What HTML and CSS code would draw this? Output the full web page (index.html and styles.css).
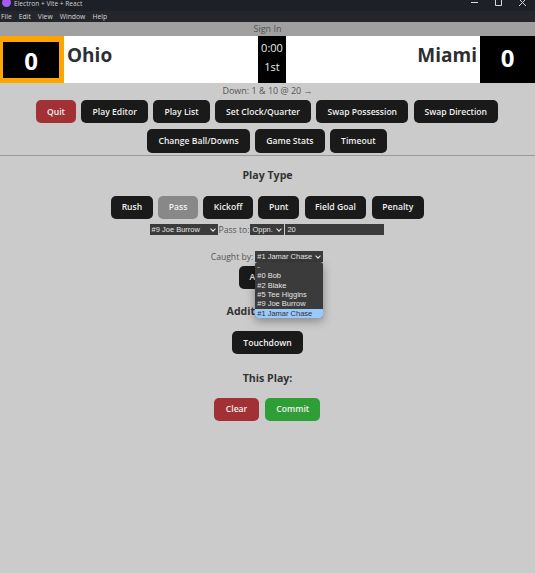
FILE: index.html
```html
<!DOCTYPE html>
<html lang="en">
<head>
<meta charset="utf-8">
<title>Electron + Vite + React</title>
<link rel="stylesheet" href="styles.css">
</head>
<body>
<header class="titlebar">
  <div class="title-left"><span class="app-icon"></span><span>Electron + Vite + React</span></div>
  <div class="win-controls">
    <svg width="9" height="9" viewBox="0 0 9 9"><path d="M1 4.5h7" stroke="#d8d8d8" fill="none"/></svg>
    <svg width="9" height="9" viewBox="0 0 9 9"><path d="M1.5 1.5h6v6h-6z" stroke="#d8d8d8" fill="none"/></svg>
    <svg width="9" height="9" viewBox="0 0 9 9"><path d="M1 1l7 7M8 1l-7 7" stroke="#d8d8d8" fill="none"/></svg>
  </div>
</header>
<nav class="menubar"><span>File</span><span>Edit</span><span>View</span><span>Window</span><span>Help</span></nav>
<div class="signin">Sign In</div>
<section class="scoreboard">
  <div class="score score-home"><div class="score-inner">0</div></div>
  <div class="team team-home">Ohio</div>
  <div class="clock"><div>0:00</div><div>1st</div></div>
  <div class="team team-away">Miami</div>
  <div class="score score-away">0</div>
</section>
<div class="down">Down: 1 &amp; 10 @ 20 →</div>
<div class="btn-rows">
  <div class="row">
    <button class="btn red quit">Quit</button>
    <button class="btn">Play Editor</button>
    <button class="btn">Play List</button>
    <button class="btn">Set Clock/Quarter</button>
    <button class="btn">Swap Possession</button>
    <button class="btn">Swap Direction</button>
  </div>
  <div class="row">
    <button class="btn">Change Ball/Downs</button>
    <button class="btn">Game Stats</button>
    <button class="btn">Timeout</button>
  </div>
</div>
<hr class="divider">
<main class="panel">
  <h3 class="heading play-type">Play Type</h3>
  <div class="row types">
    <button class="btn">Rush</button>
    <button class="btn active">Pass</button>
    <button class="btn">Kickoff</button>
    <button class="btn">Punt</button>
    <button class="btn">Field Goal</button>
    <button class="btn">Penalty</button>
  </div>
  <div class="inputs">
    <span class="sel sel-qb">#9 Joe Burrow<i class="chev"></i></span>
    <span class="lbl">Pass to:</span>
    <span class="sel sel-to">Oppn.<i class="chev"></i></span>
    <span class="yard">20</span>
  </div>
  <div class="caught">
    <span class="lbl">Caught by:</span>
    <span class="anchor">
      <span class="sel sel-caught">#1 Jamar Chase<i class="chev"></i></span>
      <ul class="dropdown">
        <li>-</li>
        <li>#0 Bob</li>
        <li>#2 Blake</li>
        <li>#5 Tee Higgins</li>
        <li>#9 Joe Burrow</li>
        <li class="hl">#1 Jamar Chase</li>
      </ul>
    </span>
  </div>
  <button class="btn add">Add Play</button>
  <h3 class="heading additional">Additional Info:</h3>
  <button class="btn td">Touchdown</button>
  <h3 class="heading this-play">This Play:</h3>
  <div class="row commit-row">
    <button class="btn red">Clear</button>
    <button class="btn green">Commit</button>
  </div>
</main>
</body>
</html>
```
FILE: styles.css
```css
* { box-sizing: border-box; }
html, body { margin: 0; height: 100%; }
body {
  background: #cbcbcb;
  font-family: "Open Sans", "Noto Sans", sans-serif;
  color: #333;
  overflow: hidden;
}
.titlebar {
  height: 11px;
  background: #1d2027;
  color: #cfcfcf;
  display: flex;
  justify-content: space-between;
  align-items: flex-start;
  font-size: 6.6px;
  line-height: 7px;
  overflow: hidden;
}
.title-left { display: flex; align-items: center; gap: 3px; padding-left: 2px; }
.app-icon {
  width: 9px; height: 9px; border-radius: 50%;
  background: #a45cf0;
  margin-top: -2px;
}
.win-controls { display: flex; gap: 15px; padding-right: 8px; margin-top: -2px; }
.menubar {
  height: 11px;
  background: #24262b;
  color: #d6d6d6;
  display: flex;
  gap: 7px;
  padding-left: 1px;
  font-size: 6.8px;
  line-height: 11px;
}
.signin {
  height: 14px;
  background: #a0a0a0;
  color: #555;
  font-size: 9px;
  line-height: 14px;
  text-align: center;
}
.scoreboard { height: 47px; display: flex; background: #fff; }
.score { background: #000; color: #fff; font-weight: 700; display: flex; align-items: center; justify-content: center; }
.score-home { width: 64px; background: #ffa500; padding: 6px 5px 5px 3px; }
.score-inner {
  width: 100%; height: 100%;
  background: #000;
  font-size: 24px;
  display: flex; align-items: center; justify-content: center;
}
.score-away { width: 55px; font-size: 24px; padding-bottom: 5px; }
.team { flex: 1; font-size: 19px; font-weight: 700; color: #2c2f33; line-height: 38.5px; padding: 0 3px; }
.team-away { text-align: right; }
.clock {
  width: 28px;
  background: #000;
  color: #ececec;
  font-size: 11px;
  line-height: 18.5px;
  text-align: center;
  padding-top: 3px;
}
.down { height: 16px; font-size: 9px; line-height: 16px; text-align: center; color: #555; }
.btn-rows { display: flex; flex-direction: column; gap: 6px; padding: 1px 1px 0 0; }
.row { display: flex; justify-content: center; gap: 5.5px; }
.btn {
  height: 23.4px;
  border: 0;
  border-radius: 5px;
  background: #1a1a1a;
  color: #f0f0f0;
  font: 600 8.6px "Open Sans", "Noto Sans", sans-serif;
  padding: 0 11px;
}
.btn.red { background: #a13135; }
.btn.green { background: #2f9e36; }
.btn.active { background: #888; }
.divider { margin: 2px 0 0; border: 0; border-top: 1px solid #999; height: 1px; }
.panel { display: flex; flex-direction: column; align-items: center; }
.heading { margin: 0; height: 14px; padding-top: 1px; font-size: 10.6px; font-weight: 700; color: #333; line-height: 14px; }
.play-type { margin-top: 11px; }
.types { margin-top: 15px; }
.types .btn { padding: 0 10.5px; }
.inputs {
  margin-top: 4.5px;
  height: 12px;
  display: flex;
  align-items: center;
  gap: 1px;
  padding-right: 1px;
}
.lbl { color: #555; font-size: 8.6px; }
.sel, .yard {
  background: #3b3b3b;
  color: #e4e4e4;
  font-family: "Liberation Sans", Arial, sans-serif;
  font-size: 7.5px;
  height: 11px;
  line-height: 11px;
  padding-left: 2px;
  display: inline-flex;
  align-items: center;
  justify-content: space-between;
}
.sel-qb { width: 68px; }
.sel-to { width: 34px; }
.yard { width: 99px; }
.chev {
  width: 4px; height: 4px;
  margin: -2px 3px 0 0;
  border-right: 1px solid #eee;
  border-bottom: 1px solid #eee;
  transform: rotate(45deg);
}
.caught { margin-top: 15px; height: 12px; display: flex; align-items: center; gap: 2px; padding-right: 1px; }
.anchor { position: relative; display: inline-flex; }
.sel-caught { width: 68px; }
.dropdown {
  position: absolute;
  top: 11px;
  left: 0;
  width: 68px;
  margin: 0;
  padding: 0;
  list-style: none;
  background: #3b3b3b;
  color: #e4e4e4;
  border-radius: 3px;
  font-family: "Liberation Sans", Arial, sans-serif;
  font-size: 7.5px;
  line-height: 9.3px;
  box-shadow: 0 3px 10px rgba(0,0,0,.35);
  z-index: 2;
  overflow: hidden;
}
.dropdown li { padding-left: 2px; }
.dropdown .hl { background: #9cc9fb; color: #333; }
.add { margin-top: 3px; }
.additional { margin-top: 14px; }
.td { margin-top: 14px; }
.this-play { margin-top: 15.6px; }
.commit-row { margin-top: 13.5px; gap: 6px; padding-right: 1px; }
.commit-row .red { padding: 0 12px; }
```
